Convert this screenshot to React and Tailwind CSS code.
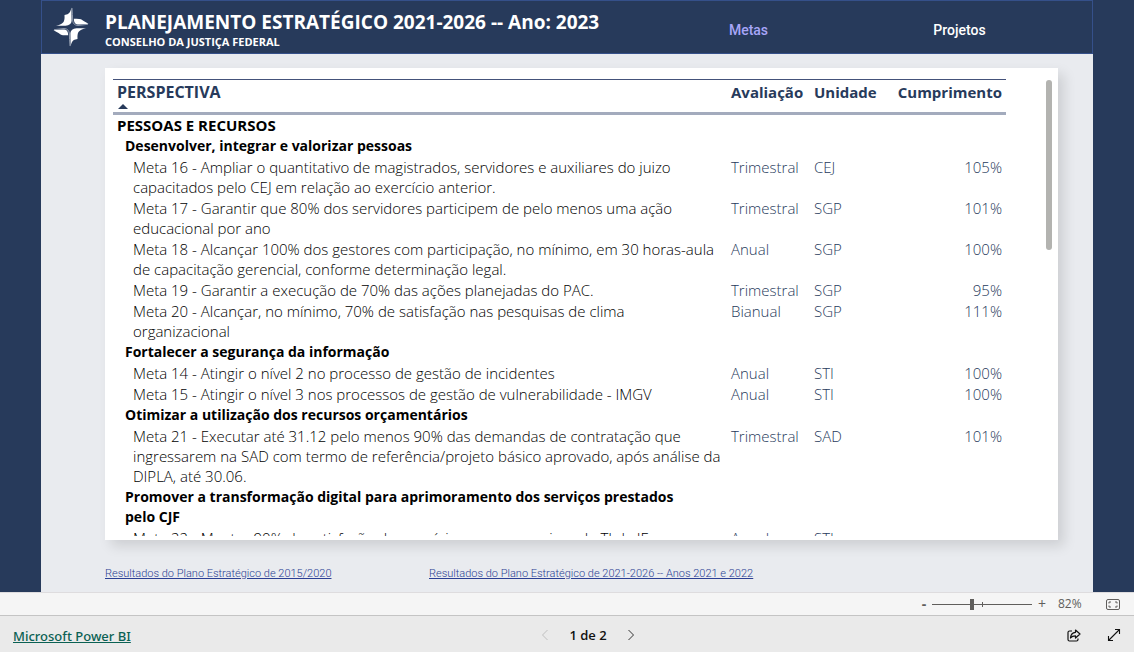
import { useState } from "react";

const groups = [
  {
    name: "Desenvolver, integrar e valorizar pessoas",
    goals: [
      {
        text: "Meta 16 - Ampliar o quantitativo de magistrados, servidores e auxiliares do juizo capacitados pelo CEJ em relação ao exercício anterior.",
        period: "Trimestral",
        unit: "CEJ",
        done: "105%",
      },
      {
        text: "Meta 17 - Garantir que 80% dos servidores participem de pelo menos uma ação educacional por ano",
        period: "Trimestral",
        unit: "SGP",
        done: "101%",
      },
      {
        text: "Meta 18 - Alcançar 100% dos gestores com participação, no mínimo, em 30 horas-aula de capacitação gerencial, conforme determinação legal.",
        period: "Anual",
        unit: "SGP",
        done: "100%",
      },
      {
        text: "Meta 19 - Garantir a execução de 70% das ações planejadas do PAC.",
        period: "Trimestral",
        unit: "SGP",
        done: "95%",
      },
      {
        text: "Meta 20 - Alcançar, no mínimo, 70% de satisfação nas pesquisas de clima organizacional",
        period: "Bianual",
        unit: "SGP",
        done: "111%",
      },
    ],
  },
  {
    name: "Fortalecer a segurança da informação",
    goals: [
      {
        text: "Meta 14 - Atingir o nível 2 no processo de gestão de incidentes",
        period: "Anual",
        unit: "STI",
        done: "100%",
      },
      {
        text: "Meta 15 - Atingir o nível 3 nos processos de gestão de vulnerabilidade - IMGV",
        period: "Anual",
        unit: "STI",
        done: "100%",
      },
    ],
  },
  {
    name: "Otimizar a utilização dos recursos orçamentários",
    goals: [
      {
        text: "Meta 21 - Executar até 31.12 pelo menos 90% das demandas de contratação que ingressarem na SAD com termo de referência/projeto básico aprovado, após análise da DIPLA, até 30.06.",
        period: "Trimestral",
        unit: "SAD",
        done: "101%",
      },
    ],
  },
  {
    name: "Promover a transformação digital para aprimoramento dos serviços prestados pelo CJF",
    goals: [
      {
        text: "Meta 22 - Manter 90% de satisfação dos usuários com os serviços de TI da JF",
        period: "Anual",
        unit: "STI",
        done: "",
      },
    ],
  },
];

function LogoHalf() {
  return (
    <>
      <path
        fill="#fff"
        d="M18.400 .5Q17.500 6 14.500 7.200L11.500 8Q12 14.500 9.500 16Q8 17.800 3 18.800H12.500Q18.200 18.300 18.600 14Z"
      />
      <path
        fill="#fff"
        d="M20.800 11.800Q26 11.500 28 12.300Q31 14.500 35.500 16.800Q29 17.800 24.500 17.500Q20.800 17 20.800 11.800Z"
      />
      <path
        fill="none"
        stroke="#a9b2c2"
        strokeWidth="0.8"
        d="M19 1Q19.600 8 19.600 13Q20 18.400 25 18.500L35 17.300"
      />
    </>
  );
}

function Logo() {
  return (
    <svg viewBox="0 0 36 40" className="h-10 w-9 shrink-0" aria-hidden="true">
      <LogoHalf />
      <g transform="rotate(180 18 20)">
        <LogoHalf />
      </g>
    </svg>
  );
}

function GoalsTable() {
  return (
    <table className="w-full table-fixed border-collapse text-left text-[15px] leading-5 text-black">
      <colgroup>
        <col />
        <col className="w-[83px]" />
        <col className="w-20" />
        <col className="w-[116px]" />
      </colgroup>
      <thead>
        <tr className="border-t border-b-[3px] border-t-[#44527a] border-b-[#a3abbd] align-top text-[#273a5b]">
          <th className="h-[34px] px-1 pt-0.5 text-base leading-5 font-bold">
            PERSPECTIVA
            <span className="mt-0.5 ml-px block h-0 w-0 border-x-[5px] border-b-[5px] border-x-transparent border-b-[#273a5b]" />
          </th>
          <th className="px-1 pt-0.5 font-bold">Avaliação</th>
          <th className="px-1 pt-0.5 font-bold">Unidade</th>
          <th className="px-1 pt-0.5 text-right font-bold">Cumprimento</th>
        </tr>
      </thead>
      <tbody className="align-top font-[330]">
        <tr>
          <th className="px-1 pb-px font-bold">PESSOAS E RECURSOS</th>
        </tr>
        {groups.map((group) => [
          <tr key={group.name}>
            <th className="pr-6 pb-px pl-3 text-sm leading-5 font-bold">{group.name}</th>
          </tr>,
          ...group.goals.map((goal) => (
            <tr key={goal.text}>
              <td className="pr-0.5 pb-px pl-5">{goal.text}</td>
              <td className="px-1 pb-px text-[#273a5b]">{goal.period}</td>
              <td className="px-1 pb-px text-[#273a5b]">{goal.unit}</td>
              <td className="px-1 pb-px text-right text-[#273a5b]">{goal.done}</td>
            </tr>
          )),
        ])}
      </tbody>
    </table>
  );
}

function ZoomBar() {
  const [zoom, setZoom] = useState(40);

  return (
    <div className="flex h-[23px] shrink-0 items-center justify-end border-t border-[#dedcde] bg-[#f5f5f5] pr-3.5 text-[#605e5c]">
      <button type="button" aria-label="Reduzir" className="w-4 text-center text-sm leading-4 font-bold">
        -
      </button>
      <div className="relative flex items-center">
        <input
          type="range"
          min="0"
          max="100"
          value={zoom}
          onChange={(e) => setZoom(Number(e.target.value))}
          aria-label="Zoom"
          className="h-[11px] w-[100px] appearance-none bg-transparent [&::-webkit-slider-runnable-track]:h-px [&::-webkit-slider-runnable-track]:bg-[#605e5c] [&::-webkit-slider-thumb]:-mt-[5px] [&::-webkit-slider-thumb]:h-[11px] [&::-webkit-slider-thumb]:w-1 [&::-webkit-slider-thumb]:appearance-none [&::-webkit-slider-thumb]:bg-[#605e5c]"
        />
        <span className="absolute left-1/2 h-[5px] w-px bg-[#605e5c]" />
      </div>
      <button type="button" aria-label="Ampliar" className="ml-1 w-3 text-center text-sm leading-4">
        +
      </button>
      <span className="ml-2.5 w-[26px] text-xs leading-4">82%</span>
      <button type="button" aria-label="Ajustar à página" className="ml-[22px]">
        <svg viewBox="0 0 14 11" className="h-[11px] w-3.5" fill="none" stroke="#605e5c">
          <rect x="0.5" y="0.5" width="13" height="10" rx="1.500" />
          <path d="M5 3H3v1.500M9 3h2v1.500M5 8H3V6.500M9 8h2V6.500" />
        </svg>
      </button>
    </div>
  );
}

function StatusBar() {
  return (
    <footer className="grid h-[37px] shrink-0 grid-cols-3 items-center border-t border-[#c4c4c4] bg-[#eaeaea] px-[13px] pt-1">
      <a href="#powerbi" className="font-['Noto_Sans',sans-serif] text-[13px] leading-5 font-medium text-[#0b6153] underline">
        Microsoft Power BI
      </a>
      <nav className="flex items-center justify-center pb-0.5 pl-[42px] text-[13px] leading-5 font-semibold text-[#111]">
        <button type="button" aria-label="Página anterior" disabled>
          <svg viewBox="0 0 8 12" className="h-3 w-2" fill="none" stroke="#c0c0c0">
            <path d="M6.500 1L1.500 6l5 5" />
          </svg>
        </button>
        <span className="mx-5 whitespace-nowrap">1 de 2</span>
        <button type="button" aria-label="Próxima página">
          <svg viewBox="0 0 8 12" className="h-3 w-2" fill="none" stroke="#333">
            <path d="M1.500 1l5 5-5 5" />
          </svg>
        </button>
      </nav>
      <div className="flex items-center justify-end gap-[26px] pb-0.5">
        <button type="button" aria-label="Compartilhar">
          <svg viewBox="0 0 14 13" className="h-[13px] w-3.5" fill="none" stroke="#111" strokeWidth="1.200" strokeLinejoin="round">
            <path d="M5 2H2.500Q1 2 1 3.500v7Q1 12 2.500 12h7Q11 12 11 10.500V9.500" />
            <path d="M8.500 1l4.500 4-4.500 4V6.800Q5 6.800 3.500 9Q3.800 3.800 8.500 3.300z" />
          </svg>
        </button>
        <button type="button" aria-label="Tela inteira">
          <svg viewBox="0 0 14 14" className="h-3.5 w-3.5" fill="none" stroke="#111" strokeWidth="1.100">
            <path d="M1.500 12.500l11-11M8 1.500h4.500V6M1.500 8v4.500H6" />
          </svg>
        </button>
      </div>
    </footer>
  );
}

export default function App() {
  return (
    <div className="flex h-screen flex-col font-['Open_Sans',sans-serif]">
      <main className="flex min-h-0 flex-1 flex-col bg-[#273a5b] px-[41px]">
        <header className="flex h-[54px] shrink-0 items-center border border-[#35508a] pr-[27px] pl-[11px] text-white">
          <Logo />
          <div className="ml-4 flex-1 pt-1.5 font-bold whitespace-nowrap">
            <h1 className="text-[19px] leading-6">PLANEJAMENTO ESTRATÉGICO 2021-2026 -- Ano: 2023</h1>
            <p className="text-[11px] leading-4">CONSELHO DA JUSTIÇA FEDERAL</p>
          </div>
          <nav className="flex pt-1.5 text-center font-[Roboto,sans-serif] text-sm font-medium">
            <a href="#metas" className="w-[211px] text-[#a8a6f8]">
              Metas
            </a>
            <a href="#projetos" className="w-[211px]">
              Projetos
            </a>
          </nav>
        </header>
        <div className="flex min-h-0 flex-1 flex-col bg-[#e9ebef] pt-[14px] pr-[35px] pl-16">
          <section className="flex min-h-0 flex-1 bg-white pt-[11px] pr-1.5 pb-1 pl-2 shadow-[6px_6px_12px_rgba(0,0,0,0.12)]">
            <div className="min-w-0 flex-1 overflow-hidden">
              <GoalsTable />
            </div>
            <div className="mt-px ml-10 h-[170px] w-1.5 rounded-full bg-[#b3b3b0]" />
          </section>
          <div className="flex h-[52px] shrink-0 items-center pt-4 font-[Roboto,sans-serif] text-[11px] leading-4 font-light text-[#2b3f94] underline">
            <div className="w-[324px]">
              <a href="#2015-2020">Resultados do Plano Estratégico de 2015/2020</a>
            </div>
            <a href="#2021-2022">Resultados do Plano Estratégico de 2021-2026 -- Anos 2021 e 2022</a>
          </div>
        </div>
      </main>
      <ZoomBar />
      <StatusBar />
    </div>
  );
}
